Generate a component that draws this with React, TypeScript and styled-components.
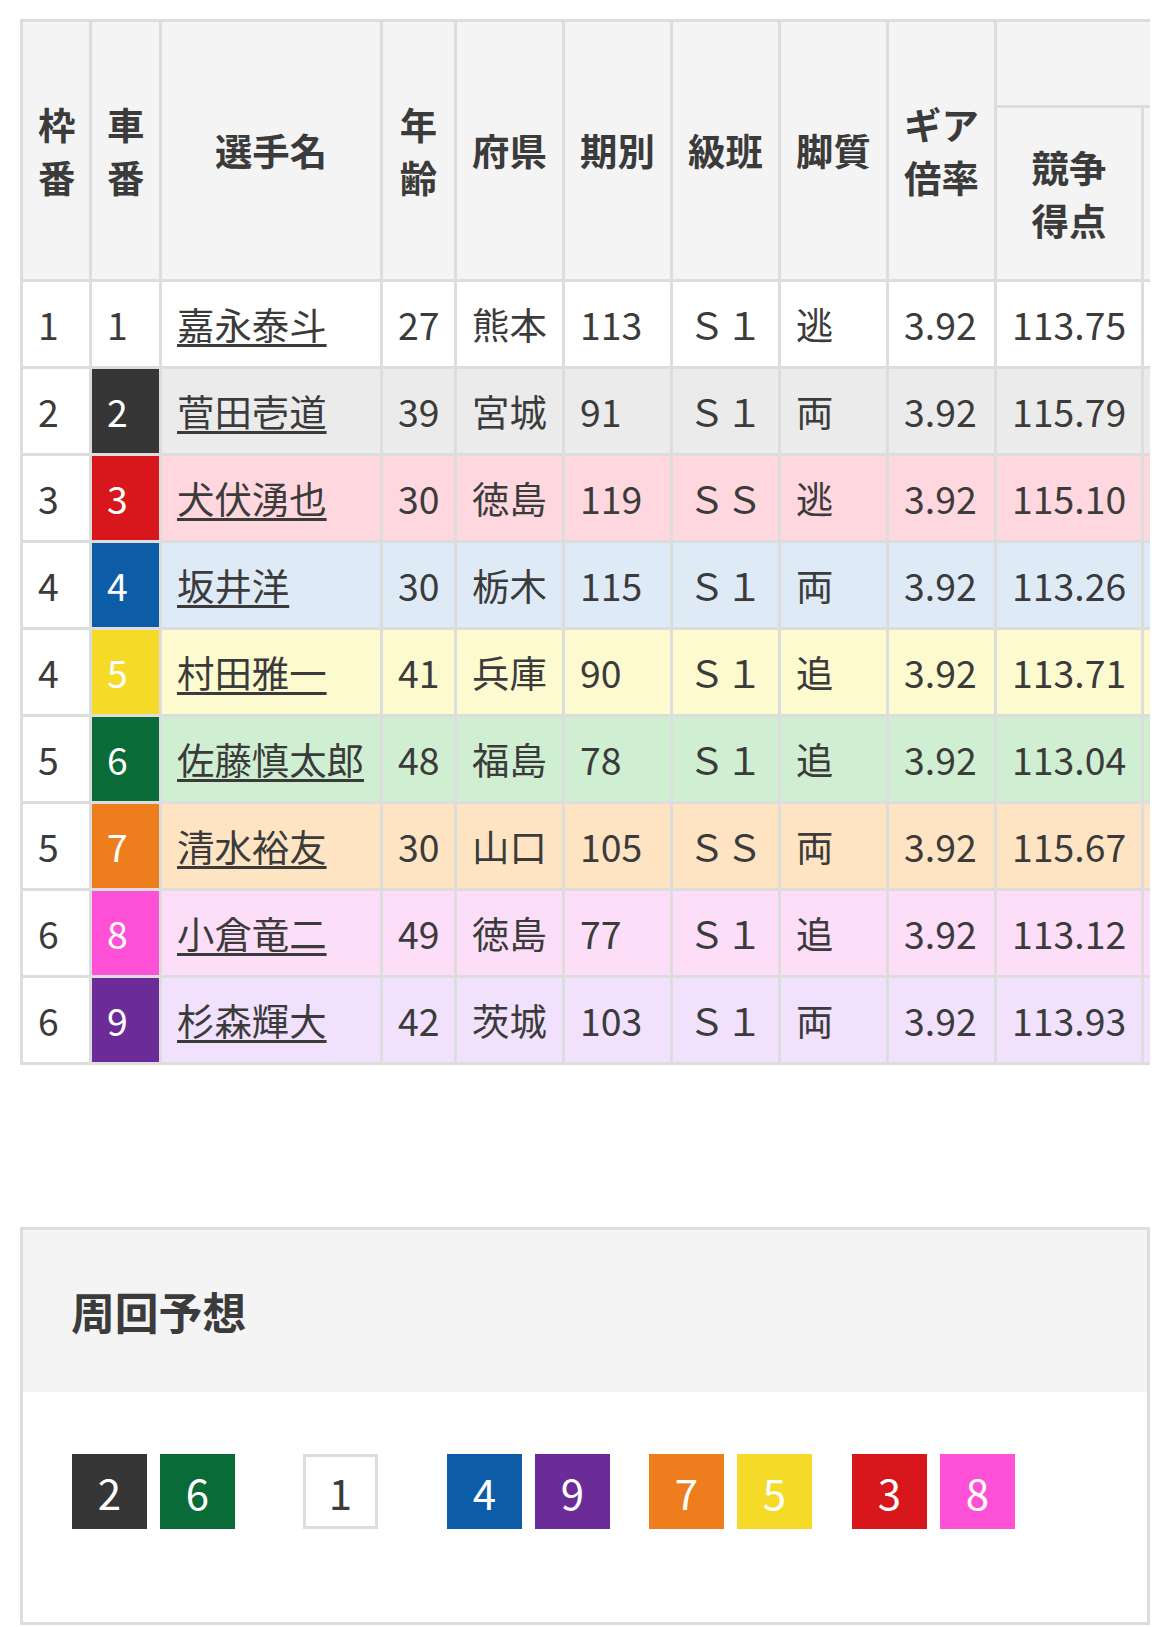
import React from 'react'
import styled, { createGlobalStyle } from 'styled-components'

const GlobalStyle = createGlobalStyle`
  html, body {
    margin: 0;
    padding: 0;
    background: #fff;
  }

  body {
    font-family: 'Noto Sans CJK JP', 'Noto Sans', sans-serif;
    color: #3b3b3b;
  }
`

type CarColor = { solid: string; tint: string; text: string }

const carColors: Record<number, CarColor> = {
  1: { solid: '#ffffff', tint: '#ffffff', text: '#3b3b3b' },
  2: { solid: '#363636', tint: '#ebebeb', text: '#ffffff' },
  3: { solid: '#d7171b', tint: '#ffd7df', text: '#ffffff' },
  4: { solid: '#0c5ca8', tint: '#deebf7', text: '#ffffff' },
  5: { solid: '#f5db27', tint: '#fefad0', text: '#ffffff' },
  6: { solid: '#086b38', tint: '#d0efd2', text: '#ffffff' },
  7: { solid: '#ed7d1d', tint: '#ffe4c4', text: '#ffffff' },
  8: { solid: '#fe51d7', tint: '#fddef8', text: '#ffffff' },
  9: { solid: '#6b2c98', tint: '#f1e1fd', text: '#ffffff' },
}

type Racer = {
  frame: number
  car: number
  name: string
  age: number
  pref: string
  term: number
  rank: string
  style: string
  gear: string
  score: string
}

const racers: Racer[] = [
  { frame: 1, car: 1, name: '嘉永泰斗', age: 27, pref: '熊本', term: 113, rank: 'Ｓ１', style: '逃', gear: '3.92', score: '113.75' },
  { frame: 2, car: 2, name: '菅田壱道', age: 39, pref: '宮城', term: 91, rank: 'Ｓ１', style: '両', gear: '3.92', score: '115.79' },
  { frame: 3, car: 3, name: '犬伏湧也', age: 30, pref: '徳島', term: 119, rank: 'ＳＳ', style: '逃', gear: '3.92', score: '115.10' },
  { frame: 4, car: 4, name: '坂井洋', age: 30, pref: '栃木', term: 115, rank: 'Ｓ１', style: '両', gear: '3.92', score: '113.26' },
  { frame: 4, car: 5, name: '村田雅一', age: 41, pref: '兵庫', term: 90, rank: 'Ｓ１', style: '追', gear: '3.92', score: '113.71' },
  { frame: 5, car: 6, name: '佐藤慎太郎', age: 48, pref: '福島', term: 78, rank: 'Ｓ１', style: '追', gear: '3.92', score: '113.04' },
  { frame: 5, car: 7, name: '清水裕友', age: 30, pref: '山口', term: 105, rank: 'ＳＳ', style: '両', gear: '3.92', score: '115.67' },
  { frame: 6, car: 8, name: '小倉竜二', age: 49, pref: '徳島', term: 77, rank: 'Ｓ１', style: '追', gear: '3.92', score: '113.12' },
  { frame: 6, car: 9, name: '杉森輝大', age: 42, pref: '茨城', term: 103, rank: 'Ｓ１', style: '両', gear: '3.92', score: '113.93' },
]

// column widths (cell border-box); the last column only peeks in at the scroll edge
const columnWidths = [66, 67, 218, 71, 105, 105, 105, 105, 105, 144, 147]
const tableWidth = columnWidths.reduce((sum, w) => sum + w, 0) + (columnWidths.length + 1) * 3

// line-up prediction: groups of cars and the space after each group
const lineUp = [
  { cars: [2, 6], after: 68 },
  { cars: [1], after: 69 },
  { cars: [4, 9], after: 39 },
  { cars: [7, 5], after: 40 },
  { cars: [3, 8], after: 0 },
]

const App = () => (
  <Page>
    <GlobalStyle />

    <TableScroll>
      <EntryTable style={{ width: tableWidth }}>
        <colgroup>
          {columnWidths.map((w, i) => (
            <col key={i} style={{ width: w }} />
          ))}
        </colgroup>
        <thead>
          <GroupRow>
            <HeadCell rowSpan={2}>枠<br />番</HeadCell>
            <HeadCell rowSpan={2}>車<br />番</HeadCell>
            <HeadCell rowSpan={2}>選手名</HeadCell>
            <HeadCell rowSpan={2}>年<br />齢</HeadCell>
            <HeadCell rowSpan={2}>府県</HeadCell>
            <HeadCell rowSpan={2}>期別</HeadCell>
            <HeadCell rowSpan={2}>級班</HeadCell>
            <HeadCell rowSpan={2}>脚質</HeadCell>
            <HeadCell rowSpan={2}>ギア<br />倍率</HeadCell>
            <HeadCell colSpan={2} />
          </GroupRow>
          <SubHeadRow>
            <HeadCell>競争<br />得点</HeadCell>
            <HeadCell />
          </SubHeadRow>
        </thead>
        <tbody>
          {racers.map((r) => {
            const c = carColors[r.car]
            return (
              <BodyRow key={r.car}>
                <Cell $bg="#ffffff">{r.frame}</Cell>
                <Cell $bg={c.solid} $color={c.text}>{r.car}</Cell>
                <Cell $bg={c.tint}>
                  <NameLink href="#">{r.name}</NameLink>
                </Cell>
                <Cell $bg={c.tint}>{r.age}</Cell>
                <Cell $bg={c.tint}>{r.pref}</Cell>
                <Cell $bg={c.tint}>{r.term}</Cell>
                <Cell $bg={c.tint}>{r.rank}</Cell>
                <Cell $bg={c.tint}>{r.style}</Cell>
                <Cell $bg={c.tint}>{r.gear}</Cell>
                <Cell $bg={c.tint}>{r.score}</Cell>
                <Cell $bg={c.tint} />
              </BodyRow>
            )
          })}
        </tbody>
      </EntryTable>
    </TableScroll>

    <PredictionBox>
      <PredictionTitle>周回予想</PredictionTitle>
      <LineUp>
        {lineUp.map((group, i) => (
          <LineGroup key={i} $after={group.after}>
            {group.cars.map((car) => (
              <CarBox key={car} $bg={carColors[car].solid} $color={carColors[car].text} $outlined={car === 1}>
                {car}
              </CarBox>
            ))}
          </LineGroup>
        ))}
      </LineUp>
    </PredictionBox>
  </Page>
)

export default App

const Page = styled.div`
  padding: 19px 20px 2px;
`

const TableScroll = styled.div`
  width: 1130px;
  overflow: hidden;
`

const EntryTable = styled.table`
  table-layout: fixed;
  border-collapse: separate;
  border-spacing: 3px;
  background: #dddddd;
  font-size: 37.4px;
  line-height: 1.4;
`

const GroupRow = styled.tr`
  height: 83px;
`

const SubHeadRow = styled.tr`
  height: 171px;
`

const BodyRow = styled.tr`
  height: 84px;
`

const HeadCell = styled.th`
  box-sizing: border-box;
  padding: 0 15px;
  background: #f4f4f4;
  font-weight: 700;
  text-align: center;
  vertical-align: middle;
  white-space: nowrap;
`

const Cell = styled.td<{ $bg: string; $color?: string }>`
  box-sizing: border-box;
  padding: 0 15px;
  background: ${({ $bg }) => $bg};
  color: ${({ $color }) => $color ?? '#3b3b3b'};
  text-align: left;
  vertical-align: middle;
  white-space: nowrap;
`

const NameLink = styled.a`
  color: inherit;
  text-decoration: underline;
  text-decoration-thickness: 3px;
  text-underline-offset: 4px;
`

const PredictionBox = styled.section`
  margin-top: 162px;
  width: 1130px;
  box-sizing: border-box;
  border: 3px solid #dddddd;
`

const PredictionTitle = styled.h2`
  margin: 0;
  height: 162px;
  box-sizing: border-box;
  display: flex;
  align-items: center;
  padding: 0 48px;
  background: #f4f4f4;
  font-size: 43.8px;
  font-weight: 700;
`

const LineUp = styled.div`
  display: flex;
  padding: 62px 49px 93px;
`

const LineGroup = styled.div<{ $after: number }>`
  display: flex;
  gap: 13px;
  margin-right: ${({ $after }) => $after}px;
`

const CarBox = styled.span<{ $bg: string; $color: string; $outlined: boolean }>`
  width: 75px;
  height: 75px;
  box-sizing: border-box;
  display: flex;
  align-items: center;
  justify-content: center;
  background: ${({ $bg }) => $bg};
  color: ${({ $color }) => $color};
  border: ${({ $outlined }) => ($outlined ? '3px solid #dddddd' : 'none')};
  font-size: 42px;
  line-height: 1;
`
